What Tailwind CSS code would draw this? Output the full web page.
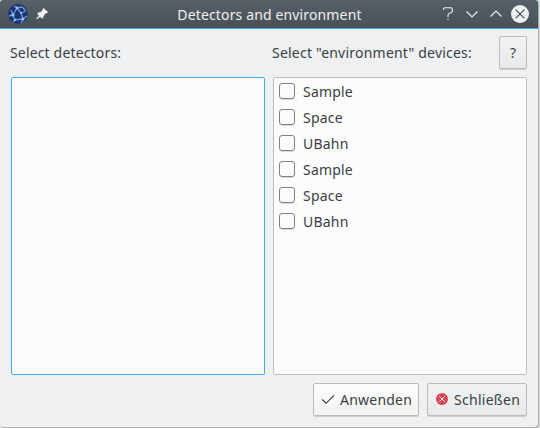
<!DOCTYPE html>
<html lang="de">
<head>
<meta charset="utf-8">
<title>Detectors and environment</title>
<script src="https://cdn.jsdelivr.net/npm/@tailwindcss/browser@4"></script>
</head>
<body class="w-[540px] h-[428px] overflow-hidden bg-[#dcdcdd] font-['Noto_Sans',sans-serif] text-[14px] leading-[20px] text-[#3a3f44]">
<div class="w-[538px] h-[427px] flex flex-col bg-[#eff0f1] rounded-t-[3px] rounded-br-[4px] rounded-bl-[3px] overflow-hidden shadow-[1px_1px_0_#adaeaf]">
  <header class="h-[29px] shrink-0 flex items-center bg-linear-to-b from-[#586169] to-[#475057] border-b border-[#3daee9] pl-[8px] pr-[9px] text-[#eff0f1]">
    <svg class="w-[20px] h-[20px] shrink-0" viewBox="0 0 20 20">
      <circle cx="10" cy="10" r="9.9" fill="#1c3472"/>
      <g fill="none" stroke="#6c99d4" stroke-width="1.3">
        <path d="M1 12L5 11L9 4L6 2M5 11L3 6M9 4L14 3M9 4L13 9L18 7M13 9L15 15L19 12M5 11L7 16L15 15M7 16L5 18M15 15L13 19M14 3L18 7"/>
      </g>
      <g fill="#9fc4ec"><circle cx="5" cy="11" r="1.5"/><circle cx="9" cy="4" r="1.4"/><circle cx="13" cy="9" r="1.1"/><circle cx="7" cy="16" r="1.1"/><circle cx="15" cy="15" r="1.5"/></g>
    </svg>
    <svg class="w-[12px] h-[12px] ml-[8px] shrink-0" viewBox="0 0 12 12" fill="#f4f5f5">
      <path d="M7.5 0L12 4.3L10.7 5.3L10 5L7.5 8L7.3 10L6 10.5L4 8.7L1.2 11.2L.3 10.5L3 7.7L1.3 6L2 4.6L4.2 4.3L7 1.8L6.6 1Z"/>
    </svg>
    <h1 class="flex-1 text-center font-normal pl-[52px] pt-px tracking-[0.14px] whitespace-nowrap">Detectors and environment</h1>
    <div class="flex items-center gap-[6px] shrink-0">
      <svg class="w-[18px] h-[18px]" viewBox="0 0 18 18" fill="none" stroke="#eff0f1" stroke-width="1.1"><path d="M4.6 5V3.8Q4.6 2.7 6 2.7H11.5Q13.4 2.7 13.4 4.5V6Q13.4 7.5 11.8 7.8L10.6 8.2Q9 8.7 9 10.2V12.3"/><path d="M9 14V15.3"/></svg>
      <svg class="w-[18px] h-[18px]" viewBox="0 0 18 18" fill="none" stroke="#eff0f1" stroke-width="1.2"><path d="M3.5 6.5L9 12L14.5 6.5"/></svg>
      <svg class="w-[18px] h-[18px]" viewBox="0 0 18 18" fill="none" stroke="#eff0f1" stroke-width="1.2"><path d="M3.5 11.5L9 6L14.5 11.5"/></svg>
      <svg class="w-[18px] h-[18px]" viewBox="0 0 18 18"><circle cx="9" cy="9" r="9" fill="#eff0f1"/><path d="M4.6 4.6L13.4 13.4M13.4 4.6L4.6 13.4" stroke="#475057" stroke-width="1.2"/></svg>
    </div>
  </header>
  <main class="flex-1 flex flex-col pl-[11px] pr-[11px] pt-[7px]">
    <div class="flex items-center h-[33px]">
      <span class="w-[261px] -ml-px tracking-[0.16px]">Select detectors:</span>
      <span class="flex-1 pl-px tracking-[0.22px] whitespace-nowrap">Select "environment" devices:</span>
      <button class="w-[28px] h-[33px] rounded-[2px] border border-[#b8babc] bg-linear-to-b from-[#f1f2f3] to-[#e8e9ea] shadow-[0_1px_0_#cfd0d1]">?</button>
    </div>
    <div class="flex gap-[8px] mt-[8px] h-[298px]">
      <div class="w-[254px] border border-[#3daee9] rounded-[2px] bg-[#fcfcfc]"></div>
      <ul class="w-[254px] border border-[#bcbebf] rounded-[2px] bg-[#fcfcfc] pl-[5px] pt-px tracking-[0.2px]">
        <li class="flex items-center h-[26px] gap-[8px]"><i class="size-[16px] mb-[2px] border border-[#7f8386] rounded-[3px] shadow-[0_1px_0_#dadbdb]"></i>Sample</li>
        <li class="flex items-center h-[26px] gap-[8px]"><i class="size-[16px] mb-[2px] border border-[#7f8386] rounded-[3px] shadow-[0_1px_0_#dadbdb]"></i>Space</li>
        <li class="flex items-center h-[26px] gap-[8px]"><i class="size-[16px] mb-[2px] border border-[#7f8386] rounded-[3px] shadow-[0_1px_0_#dadbdb]"></i>UBahn</li>
        <li class="flex items-center h-[26px] gap-[8px]"><i class="size-[16px] mb-[2px] border border-[#7f8386] rounded-[3px] shadow-[0_1px_0_#dadbdb]"></i>Sample</li>
        <li class="flex items-center h-[26px] gap-[8px]"><i class="size-[16px] mb-[2px] border border-[#7f8386] rounded-[3px] shadow-[0_1px_0_#dadbdb]"></i>Space</li>
        <li class="flex items-center h-[26px] gap-[8px]"><i class="size-[16px] mb-[2px] border border-[#7f8386] rounded-[3px] shadow-[0_1px_0_#dadbdb]"></i>UBahn</li>
      </ul>
    </div>
    <div class="flex justify-end gap-[8px] mt-[8px]">
      <button class="w-[106px] h-[33px] flex items-center pl-[7px] gap-[5px] rounded-[2px] border border-[#b8babc] bg-linear-to-b from-[#fcfcfc] to-[#f1f2f2] shadow-[0_1px_0_#cfd0d1] tracking-[0.22px]">
        <svg class="w-[14px] h-[14px] mb-[2px] shrink-0" viewBox="0 0 14 14" fill="none" stroke="#31363b" stroke-width="1.1"><path d="M1.2 7.5L5 11.3L13 3.3"/></svg>Anwenden
      </button>
      <button class="w-[100px] h-[33px] flex items-center pl-[8px] gap-[6px] rounded-[2px] border border-[#b8babc] bg-linear-to-b from-[#f1f2f3] to-[#e8e9ea] shadow-[0_1px_0_#cfd0d1] tracking-[0.28px]">
        <svg class="w-[12px] h-[12px] mb-[2px] shrink-0" viewBox="0 0 12 12"><circle cx="6" cy="6" r="6" fill="#da4453"/><path d="M3.2 3.2L8.8 8.8M8.8 3.2L3.2 8.8" stroke="#fbe9eb" stroke-width="1"/></svg>Schließen
      </button>
    </div>
  </main>
</div>
</body>
</html>
